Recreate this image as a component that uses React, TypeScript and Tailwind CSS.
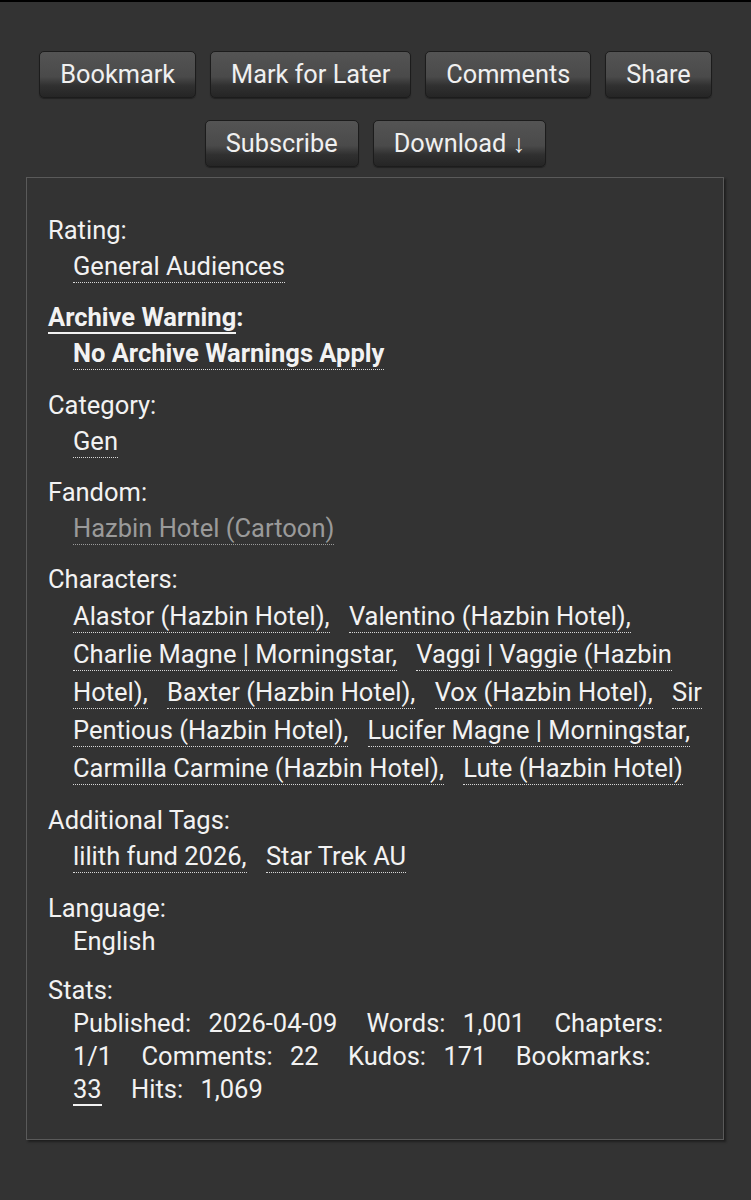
import React from "react";

const characters = [
  "Alastor (Hazbin Hotel)",
  "Valentino (Hazbin Hotel)",
  "Charlie Magne | Morningstar",
  "Vaggi | Vaggie (Hazbin Hotel)",
  "Baxter (Hazbin Hotel)",
  "Vox (Hazbin Hotel)",
  "Sir Pentious (Hazbin Hotel)",
  "Lucifer Magne | Morningstar",
  "Carmilla Carmine (Hazbin Hotel)",
  "Lute (Hazbin Hotel)",
];

const freeforms = ["lilith fund 2026", "Star Trek AU"];

const stats: { label: string; value: string; link?: boolean }[] = [
  { label: "Published:", value: "2026-04-09" },
  { label: "Words:", value: "1,001" },
  { label: "Chapters:", value: "1/1" },
  { label: "Comments:", value: "22" },
  { label: "Kudos:", value: "171" },
  { label: "Bookmarks:", value: "33", link: true },
  { label: "Hits:", value: "1,069" },
];

const Button = ({ children }: { children: React.ReactNode }) => (
  <button className="h-[47px] px-[20px] rounded-[5px] border border-[#1c1c1c] bg-[linear-gradient(#545454_0%,#4a4a4a_55%,#303030_75%,#252525_100%)] text-[25.3px] text-[#f0f0f0] shadow-[0_1px_1px_#222]">
    {children}
  </button>
);

// tag list: links are inline so long names wrap inside
const TagList = ({
  tags,
  muted,
  className = "",
}: {
  tags: string[];
  muted?: boolean;
  className?: string;
}) => (
  <dd className={"ml-[25px] leading-[38px] " + className}>
    {tags.map((t, i) => (
      <React.Fragment key={t}>
        <span
          className={
            "border-b border-dotted pb-[1px] " +
            (muted ? "text-[#9a9a9a] border-[#9a9a9a]" : "border-[#d8d8d8]") +
            (i < tags.length - 1 ? " mr-[13px]" : "")
          }
        >
          {t}
          {i < tags.length - 1 ? "," : ""}
        </span>{" "}
      </React.Fragment>
    ))}
  </dd>
);

const App = () => {
  return (
    <div
      className="min-h-[1200px] bg-[#333333] text-[#f2f2f2] text-[25.5px]"
      style={{ fontFamily: "Roboto, 'Liberation Sans', sans-serif" }}
    >
      <div className="h-[2px] bg-black" />
      <div className="pt-[49px] flex flex-wrap justify-center gap-x-[14px] gap-y-[22px]">
        <Button>Bookmark</Button>
        <Button>Mark for Later</Button>
        <Button>Comments</Button>
        <Button>Share</Button>
        <Button>Subscribe</Button>
        <Button>Download ↓</Button>
      </div>

      <div className="mt-[10px] ml-[26px] mr-[27px] border border-[#5a5a5a] shadow-[2px_2px_2px_#1f1f1f] pt-[36px] pb-[33px] pl-[21px] pr-[18px]">
        <dl>
          <div className="mb-4">
            <dt className="leading-[33px]">Rating:</dt>
            <TagList tags={["General Audiences"]} />
          </div>
          <div className="mb-[17px] font-bold">
            <dt className="leading-[33px]">
              <span className="border-b-2 border-[#f2f2f2]">Archive Warning</span>:
            </dt>
            <TagList tags={["No Archive Warnings Apply"]} />
          </div>
          <div className="mb-4">
            <dt className="leading-[33px]">Category:</dt>
            <TagList tags={["Gen"]} />
          </div>
          <div className="mb-4">
            <dt className="leading-[33px]">Fandom:</dt>
            <TagList tags={["Hazbin Hotel (Cartoon)"]} muted />
          </div>
          <div className="mb-[17px]">
            <dt className="leading-[33px]">Characters:</dt>
            <TagList tags={characters} className="mt-[1px]" />
          </div>
          <div className="mb-[17px]">
            <dt className="leading-[33px]">Additional Tags:</dt>
            <TagList tags={freeforms} />
          </div>
          <div className="mb-4">
            <dt className="leading-[33px]">Language:</dt>
            <dd className="ml-[25px] leading-[33px]">English</dd>
          </div>
          <div>
            <dt className="leading-[33px]">Stats:</dt>
            <dd className="ml-[25px] leading-[33px]">
              {stats.map((s, i) => (
                <React.Fragment key={s.label}>
                  <span className="mr-[11px]">{s.label}</span>{" "}
                  <span
                    className={
                      (i < stats.length - 1 ? "mr-[23px]" : "") +
                      (s.link ? " border-b-2 border-[#f2f2f2]" : "")
                    }
                  >
                    {s.value}
                  </span>{" "}
                </React.Fragment>
              ))}
            </dd>
          </div>
        </dl>
      </div>
    </div>
  );
};

export default App;
